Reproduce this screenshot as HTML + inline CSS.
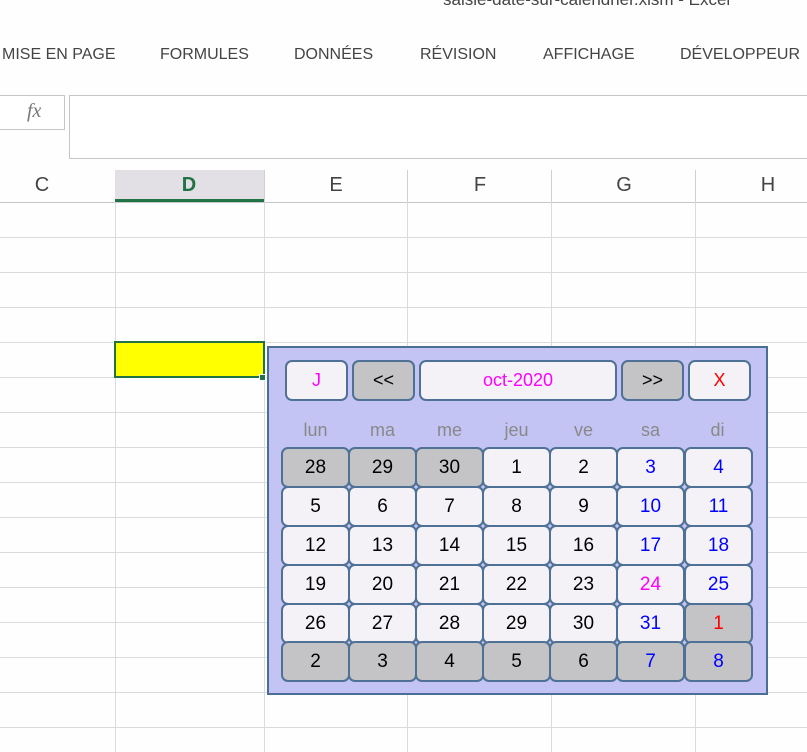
<!DOCTYPE html>
<html><head><meta charset="utf-8"><style>
*{margin:0;padding:0;box-sizing:border-box}
body{width:807px;height:752px;overflow:hidden;background:#fdfefd;font-family:"Liberation Sans",sans-serif;position:relative}
.a{position:absolute}
.tab{position:absolute;top:46px;font-size:16px;color:#444}
.hl{position:absolute;left:0;width:807px;height:1px;background:#dadcda}
.vl{position:absolute;top:202px;height:550px;width:1px;background:#dadcda}
.ch{position:absolute;top:174px;font-size:20px;color:#444;transform:translateX(-50%)}
.btn{position:absolute;top:360px;height:41px;border:2px solid #4f7196;border-radius:7px;background:#f4f2f7;text-align:center;line-height:37px;font-size:18px}
.dh{position:absolute;top:420px;width:67px;text-align:center;font-size:18px;color:#888}
.c{position:absolute;width:69px;height:41px;border:2px solid #4f7196;border-radius:7px;background:#f4f2f7;text-align:center;line-height:37px;font-size:19px;color:#000}
.g{background:#c4c3c6}.b{color:#0000ff}.m{color:#ff00ff}.r{color:#ff0000}
</style></head><body>
<div class="a" style="left:443px;top:-10px;font-size:17px;color:#444">saisie-date-sur-calendrier.xlsm - Excel</div>
<div class="tab" style="left:2px">MISE EN PAGE</div>
<div class="tab" style="left:160px">FORMULES</div>
<div class="tab" style="left:294px">DONNÉES</div>
<div class="tab" style="left:420px">RÉVISION</div>
<div class="tab" style="left:543px">AFFICHAGE</div>
<div class="tab" style="left:680px">DÉVELOPPEUR</div>
<div class="a" style="left:-2px;top:95px;width:67px;height:35px;border:1px solid #c6c6c6;background:#fff"></div>
<div class="a" style="left:27px;top:100px;font-family:'Liberation Serif',serif;font-style:italic;font-size:20px;color:#777">fx</div>
<div class="a" style="left:69px;top:95px;width:745px;height:64px;border:1px solid #c6c6c6;background:#fff"></div>
<div class="a" style="left:115px;top:170px;width:149px;height:32px;background:#e2e0e4"></div>
<div class="a" style="left:115px;top:199px;width:149px;height:3px;background:#217346"></div>
<div class="a" style="left:0;top:202px;width:807px;height:1px;background:#c6c6c6"></div>
<div class="a" style="left:264px;top:170px;width:1px;height:32px;background:#d0d0d0"></div>
<div class="a" style="left:407px;top:170px;width:1px;height:32px;background:#d0d0d0"></div>
<div class="a" style="left:551px;top:170px;width:1px;height:32px;background:#d0d0d0"></div>
<div class="a" style="left:695px;top:170px;width:1px;height:32px;background:#d0d0d0"></div>
<div class="ch" style="left:42px">C</div>
<div class="ch" style="left:189px;color:#217346;font-weight:bold">D</div>
<div class="ch" style="left:336px">E</div>
<div class="ch" style="left:480px">F</div>
<div class="ch" style="left:624px">G</div>
<div class="ch" style="left:768px">H</div>
<div class="hl" style="top:237px"></div><div class="hl" style="top:272px"></div><div class="hl" style="top:307px"></div><div class="hl" style="top:342px"></div><div class="hl" style="top:377px"></div><div class="hl" style="top:412px"></div><div class="hl" style="top:447px"></div><div class="hl" style="top:482px"></div><div class="hl" style="top:517px"></div><div class="hl" style="top:552px"></div><div class="hl" style="top:587px"></div><div class="hl" style="top:622px"></div><div class="hl" style="top:657px"></div><div class="hl" style="top:692px"></div><div class="hl" style="top:727px"></div>
<div class="vl" style="left:115px"></div><div class="vl" style="left:264px"></div><div class="vl" style="left:407px"></div><div class="vl" style="left:551px"></div><div class="vl" style="left:695px"></div>
<div class="a" style="left:114px;top:341px;width:151px;height:37px;border:2px solid #217346;background:#ffff00"></div>
<div class="a" style="left:259px;top:374px;width:7px;height:7px;background:#217346;border:1px solid #fff"></div>
<div class="a" style="left:267px;top:346px;width:501px;height:349px;background:#c4c4f4;border:2px solid #4a6e96"></div>
<div class="btn" style="left:285px;width:63px;color:#ff00ff">J</div>
<div class="btn" style="left:352px;width:63px;background:#c4c3c6">&lt;&lt;</div>
<div class="btn" style="left:419px;width:198px;color:#ff00ff">oct-2020</div>
<div class="btn" style="left:621px;width:63px;background:#c4c3c6">&gt;&gt;</div>
<div class="btn" style="left:688px;width:63px;color:#ff0000">X</div>
<div class="dh" style="left:282px">lun</div><div class="dh" style="left:349px">ma</div><div class="dh" style="left:416px">me</div><div class="dh" style="left:483px">jeu</div><div class="dh" style="left:550px">ve</div><div class="dh" style="left:617px">sa</div><div class="dh" style="left:684px">di</div>
<div class="c g" style="left:281px;top:447px">28</div><div class="c g" style="left:348px;top:447px">29</div><div class="c g" style="left:415px;top:447px">30</div><div class="c" style="left:482px;top:447px">1</div><div class="c" style="left:549px;top:447px">2</div><div class="c b" style="left:616px;top:447px">3</div><div class="c b" style="left:684px;top:447px">4</div>
<div class="c" style="left:281px;top:486px">5</div><div class="c" style="left:348px;top:486px">6</div><div class="c" style="left:415px;top:486px">7</div><div class="c" style="left:482px;top:486px">8</div><div class="c" style="left:549px;top:486px">9</div><div class="c b" style="left:616px;top:486px">10</div><div class="c b" style="left:684px;top:486px">11</div>
<div class="c" style="left:281px;top:525px">12</div><div class="c" style="left:348px;top:525px">13</div><div class="c" style="left:415px;top:525px">14</div><div class="c" style="left:482px;top:525px">15</div><div class="c" style="left:549px;top:525px">16</div><div class="c b" style="left:616px;top:525px">17</div><div class="c b" style="left:684px;top:525px">18</div>
<div class="c" style="left:281px;top:564px">19</div><div class="c" style="left:348px;top:564px">20</div><div class="c" style="left:415px;top:564px">21</div><div class="c" style="left:482px;top:564px">22</div><div class="c" style="left:549px;top:564px">23</div><div class="c m" style="left:616px;top:564px">24</div><div class="c b" style="left:684px;top:564px">25</div>
<div class="c" style="left:281px;top:603px">26</div><div class="c" style="left:348px;top:603px">27</div><div class="c" style="left:415px;top:603px">28</div><div class="c" style="left:482px;top:603px">29</div><div class="c" style="left:549px;top:603px">30</div><div class="c b" style="left:616px;top:603px">31</div><div class="c g r" style="left:684px;top:603px">1</div>
<div class="c g" style="left:281px;top:641px">2</div><div class="c g" style="left:348px;top:641px">3</div><div class="c g" style="left:415px;top:641px">4</div><div class="c g" style="left:482px;top:641px">5</div><div class="c g" style="left:549px;top:641px">6</div><div class="c g b" style="left:616px;top:641px">7</div><div class="c g b" style="left:684px;top:641px">8</div>
</body></html>
